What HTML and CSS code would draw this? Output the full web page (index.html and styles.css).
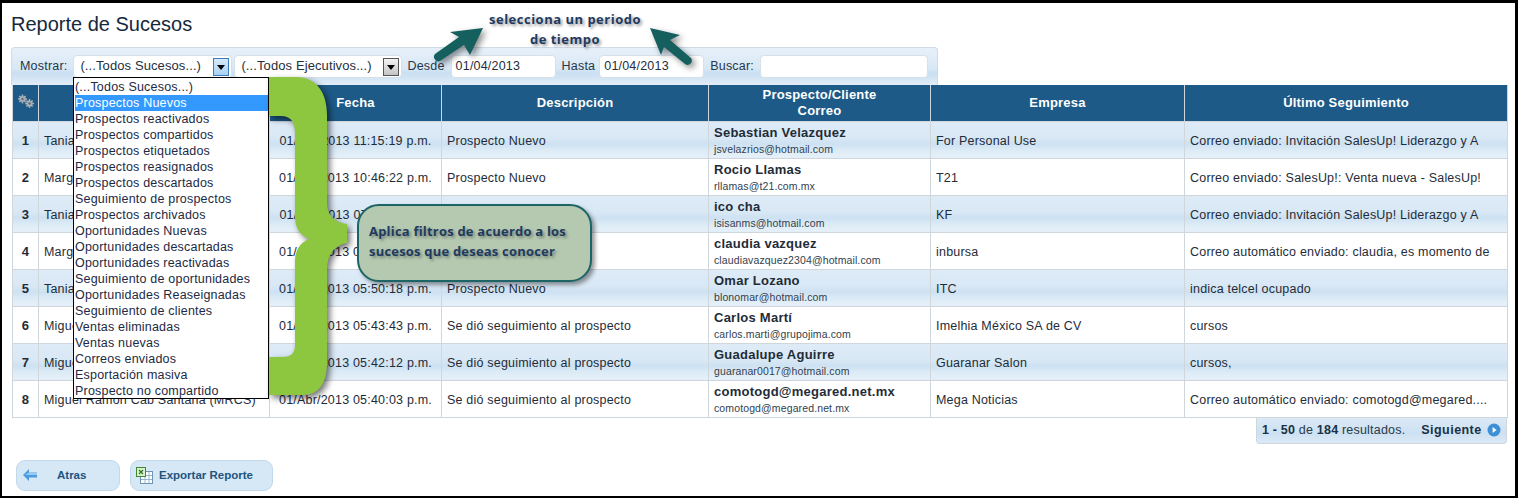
FILE: index.html
```html
<!DOCTYPE html>
<html lang="es">
<head>
<meta charset="utf-8">
<title>Reporte de Sucesos</title>
<link rel="stylesheet" href="styles.css">
</head>
<body>
<div class="frame">
  <h1 class="title">Reporte de Sucesos</h1>
  <div class="filters">
    <span class="lbl">Mostrar:</span>
    <div class="select sel-a"><span>(...Todos Sucesos...)</span><i class="sel-btn active"></i></div>
    <div class="select sel-b"><span>(...Todos Ejecutivos...)</span><i class="sel-btn"></i></div>
    <span class="lbl lbl-desde">Desde</span>
    <div class="input in-date">01/04/2013</div>
    <span class="lbl lbl-hasta">Hasta</span>
    <div class="input in-date">01/04/2013</div>
    <span class="lbl lbl-buscar">Buscar:</span>
    <div class="input in-search"></div>
  </div>
  <table class="grid">
    <colgroup>
      <col class="c1"><col class="c2"><col class="c3"><col class="c4"><col class="c5"><col class="c6"><col class="c7">
    </colgroup>
    <thead>
      <tr>
        <th class="gear-cell"><svg class="gears" viewBox="0 0 18 14" width="18" height="14"><g fill="#9aa3ab" stroke="#59636c" stroke-width=".6"><circle cx="5.5" cy="5" r="3.2"/><circle cx="12.5" cy="9.5" r="3.2"/></g><g stroke="#a9b4bd" stroke-width="1.4"><path d="M5.5 .6v8.8M1.1 5h8.8M2.4 1.9l6.2 6.2M8.6 1.9 2.4 8.1"/><path d="M12.5 5.1v8.8M8.1 9.5h8.8M9.4 6.4l6.2 6.2M15.6 6.4l-6.2 6.2"/></g><circle cx="5.5" cy="5" r="1.2" fill="#5d6a74"/><circle cx="12.5" cy="9.5" r="1.2" fill="#5d6a74"/></svg></th>
        <th>Ejecutivo</th>
        <th>Fecha</th>
        <th>Descripción</th>
        <th>Prospecto/Cliente<br>Correo</th>
        <th>Empresa</th>
        <th>Último Seguimiento</th>
      </tr>
    </thead>
    <tbody>
      <tr class="odd"><td class="num">1</td><td>Tania</td><td class="date">01/Abr/2013 11:15:19 p.m.</td><td>Prospecto Nuevo</td><td class="who"><b>Sebastian Velazquez</b><small>jsvelazrios@hotmail.com</small></td><td>For Personal Use</td><td>Correo enviado: Invitación SalesUp! Liderazgo y A</td></tr>
      <tr><td class="num">2</td><td>Margarita</td><td class="date">01/Abr/2013 10:46:22 p.m.</td><td>Prospecto Nuevo</td><td class="who"><b>Rocio Llamas</b><small>rllamas@t21.com.mx</small></td><td>T21</td><td>Correo enviado: SalesUp!: Venta nueva - SalesUp!</td></tr>
      <tr class="odd"><td class="num">3</td><td>Tania</td><td class="date">01/Abr/2013 07:20:11 p.m.</td><td>Prospecto Nuevo</td><td class="who"><b>ico cha</b><small>isisanms@hotmail.com</small></td><td>KF</td><td>Correo enviado: Invitación SalesUp! Liderazgo y A</td></tr>
      <tr><td class="num">4</td><td>Margarita</td><td class="date">01/Abr/2013 06:02:37 p.m.</td><td>Prospecto Nuevo</td><td class="who"><b>claudia vazquez</b><small>claudiavazquez2304@hotmail.com</small></td><td>inbursa</td><td>Correo automático enviado: claudia, es momento de</td></tr>
      <tr class="odd"><td class="num">5</td><td>Tania</td><td class="date">01/Abr/2013 05:50:18 p.m.</td><td>Prospecto Nuevo</td><td class="who"><b>Omar Lozano</b><small>blonomar@hotmail.com</small></td><td>ITC</td><td>indica telcel ocupado</td></tr>
      <tr><td class="num">6</td><td>Miguel</td><td class="date">01/Abr/2013 05:43:43 p.m.</td><td>Se dió seguimiento al prospecto</td><td class="who"><b>Carlos Martí</b><small>carlos.marti@grupojima.com</small></td><td>Imelhia México SA de CV</td><td>cursos</td></tr>
      <tr class="odd"><td class="num">7</td><td>Miguel</td><td class="date">01/Abr/2013 05:42:12 p.m.</td><td>Se dió seguimiento al prospecto</td><td class="who"><b>Guadalupe Aguirre</b><small>guaranar0017@hotmail.com</small></td><td>Guaranar Salon</td><td>cursos,</td></tr>
      <tr><td class="num">8</td><td>Miguel Ramón Cab Santana (MRCS)</td><td class="date">01/Abr/2013 05:40:03 p.m.</td><td>Se dió seguimiento al prospecto</td><td class="who"><b>comotogd@megared.net.mx</b><small>comotogd@megared.net.mx</small></td><td>Mega Noticias</td><td>Correo automático enviado: comotogd@megared....</td></tr>
    </tbody>
  </table>
  <div class="pager-row">
    <div class="pager"><span class="info"><b>1 - 50</b> de <b>184</b> resultados.</span><b class="next">Siguiente</b>
      <svg class="next-ico" viewBox="0 0 14 14" width="14" height="14"><circle cx="7" cy="7" r="6.5" fill="#3d8fd6"/><path d="M5.6 4v6L9.6 7z" fill="#fff"/></svg>
    </div>
  </div>
  <div class="actions">
    <a class="btn btn-back"><svg viewBox="0 0 14 14" width="14" height="14"><path d="M0 7 6 1v3.500h8v5H6V13z" fill="#4a9be0"/><path d="M6 4.500h8v2.500H2z" fill="#9cc9ef"/></svg><span>Atras</span></a>
    <a class="btn btn-export"><svg viewBox="0 0 17 17" width="17" height="17"><rect x="4.500" y="4.500" width="12" height="12" fill="#fff" stroke="#6d93b5"/><path d="M5 8.500h11M5 12.500h11M9 5v11M13 5v11" stroke="#9ab6cf"/><rect x=".5" y=".5" width="9" height="9" fill="#dff0d0" stroke="#3c8a2e"/><path d="M3 3l4 4M7 3 3 7" stroke="#2f7a22" stroke-width="1.300"/></svg><span>Exportar Reporte</span></a>
  </div>

  <ul class="dropdown">
    <li>(...Todos Sucesos...)</li>
    <li class="on">Prospectos Nuevos</li>
    <li>Prospectos reactivados</li>
    <li>Prospectos compartidos</li>
    <li>Prospectos etiquetados</li>
    <li>Prospectos reasignados</li>
    <li>Prospectos descartados</li>
    <li>Seguimiento de prospectos</li>
    <li>Prospectos archivados</li>
    <li>Oportunidades Nuevas</li>
    <li>Oportunidades descartadas</li>
    <li>Oportunidades reactivadas</li>
    <li>Seguimiento de oportunidades</li>
    <li>Oportunidades Reaseignadas</li>
    <li>Seguimiento de clientes</li>
    <li>Ventas eliminadas</li>
    <li>Ventas nuevas</li>
    <li>Correos enviados</li>
    <li>Esportación masiva</li>
    <li>Prospecto no compartido</li>
  </ul>

  <svg class="overlay" viewBox="0 0 1518 498" width="1518" height="498">
    <path class="brace" d="M269 77H296C316 77 327 92 327 115V203C327 215 335 223 347 224V243C335 245 327 254 327 270V363C327 384 318 395 303 395H269V357H283C291 357 295 353 295 345V262C295 250 300 242 310 239C300 236 295 228 295 216V134C295 122 291 116 281 116H269Z"/>
    <path class="arrow" d="M483 28 450 32 459 37 435 54C432 57 436 63 440 61L464 45 470 55Z"/>
    <path class="arrow" d="M650 28 680 35 670 40 691 58C694 62 689 67 685 64L664 47 661 55Z"/>
  </svg>
  <div class="note-top">selecciona un periodo<br>de tiempo</div>
  <div class="callout">Aplica filtros de acuerdo a los sucesos que deseas conocer</div>
</div>
</body>
</html>
```

FILE: styles.css
```css
* { box-sizing: border-box; }
html, body { margin: 0; padding: 0; }
body { background: #000; font-family: "Liberation Sans", Arial, sans-serif; color: #1d2b38; }
.frame {
  position: relative;
  width: 1513px;
  height: 493px;
  margin: 3px 0 0 2px;
  padding: 0 8px 0 9px;
  background: #fff;
  overflow: hidden;
}
.title {
  margin: 0;
  padding-top: 9px;
  height: 44px;
  font-size: 20px;
  line-height: 24px;
  font-weight: normal;
  color: #16293c;
}
.filters {
  display: flex;
  align-items: center;
  width: 927px;
  height: 38px;
  padding: 0 0 0 8px;
  background: linear-gradient(#e6f0f9 0%, #d9e8f5 55%, #c9dff2 68%, #e2edf8 100%);
  border: 1px solid #cfdbe6;
  border-bottom: 0;
  border-radius: 4px 4px 0 0;
  font-size: 12.5px;
  letter-spacing: .2px;
}
.lbl { color: #25384a; position: relative; top: -1px; }
.select, .input {
  height: 23px;
  background: #fff;
  border: 1px solid #d5e0ea;
  border-radius: 4px;
  font-size: 12.5px;
  line-height: 21px;
  color: #24303c;
}
.select { display: flex; align-items: center; justify-content: space-between; padding: 0 2px 0 6px; font-size: 13px; letter-spacing: .1px; }
.select span { position: relative; top: -1px; }
.sel-a { width: 159px; margin-left: 6px; }
.sel-b { width: 168px; margin-left: 2px; }
.sel-btn {
  position: relative;
  width: 16px;
  height: 18px;
  border: 1px solid #555;
  background: linear-gradient(#f4f4f4, #c4c4c4);
}
.sel-btn.active { border-color: #3a7cbf; background: linear-gradient(#d6ebfb, #a9d2f2); }
.sel-btn::after {
  content: "";
  position: absolute;
  left: 3px;
  top: 6px;
  border: 4px solid transparent;
  border-top: 5px solid #000;
  border-bottom: 0;
}
.lbl-desde { margin-left: 5px; }
.in-date { width: 105px; padding-left: 4px; }
.lbl-desde + .in-date { margin-left: 6px; }
.lbl-hasta + .in-date { margin-left: 4px; }
.lbl-hasta { margin-left: 6px; }
.lbl-buscar { margin-left: 6px; }
.in-search { width: 168px; margin-left: 6px; }
.grid {
  width: 1495px;
  margin-left: 1px;
  border-collapse: collapse;
  table-layout: fixed;
  font-size: 12.5px;
  letter-spacing: .2px;
  color: #1f2c38;
}
.c1 { width: 26px; } .c2 { width: 231px; } .c3 { width: 172px; } .c4 { width: 267px; }
.c5 { width: 222px; } .c6 { width: 254px; } .c7 { width: 323px; }
.grid th {
  height: 36px;
  background: #1d5a87;
  color: #fff;
  font-size: 13px;
  line-height: 16px;
  padding: 0;
  border: 1px solid #cfd6dc;
  border-top: 0;
  letter-spacing: .2px;
}
.gear-cell { vertical-align: top; text-align: center; }
.gears { display: block; margin: 9px 0 0 4px; }
.grid td {
  height: 37px;
  padding: 3px 5px 0;
  border: 1px solid #cfd6dc;
  white-space: nowrap;
  overflow: hidden;
}
.grid .odd td { background: linear-gradient(#deebf7 0%, #d9e8f5 45%, #cde1f2 62%, #dcebf6 80%, #e6f0f9 100%); }
.grid td.num { padding: 2px 0 0; text-align: center; font-weight: bold; font-size: 13px; }
.grid td.date { padding: 3px 0 0; text-align: center; }
.grid td.who { padding: 0 0 0 5px; }
.who b { display: block; font-size: 13px; line-height: 16px; margin-top: 1px; letter-spacing: .25px; }
.who small { display: block; font-size: 10.5px; line-height: 14px; margin-top: 1px; color: #33414e; letter-spacing: .12px; }
.pager-row { display: flex; justify-content: flex-end; }
.pager {
  display: flex;
  align-items: center;
  width: 251px;
  height: 26px;
  padding: 0 0 0 5px;
  font-size: 12.5px;
  letter-spacing: .2px;
  background: linear-gradient(#dbe9f6, #cde1f2 60%, #dbe9f6);
  border: 1px solid #cfd6dc;
  border-top: 0;
  border-radius: 0 0 4px 4px;
  color: #2a3a4a;
}
.pager b { color: #1b3146; }
.pager .next { margin-left: 16px; letter-spacing: .45px; }
.next-ico { margin-left: 5px; }
.actions { display: flex; gap: 10px; margin: 16px 0 0 5px; }
.btn {
  display: flex;
  align-items: center;
  height: 31px;
  background: #d6e7f5;
  border: 1px solid #c2d9ec;
  border-radius: 9px;
  color: #21557f;
  font-size: 11.5px;
  font-weight: bold;
}
.btn-back { width: 104px; padding-left: 6px; }
.btn-back span { margin-left: 20px; }
.btn-export { width: 143px; padding-left: 5px; }
.btn-export span { margin-left: 6px; }
.dropdown {
  position: absolute;
  left: 71px;
  top: 74px;
  width: 196px;
  height: 322px;
  margin: 0;
  padding: 1px 0 0 1px;
  list-style: none;
  background: #fff;
  border: 1px solid #000;
  font-size: 12.5px;
  letter-spacing: .2px;
  line-height: 16px;
  color: #1c2a44;
}
.dropdown li { height: 16px; white-space: nowrap; }
.dropdown .on { background: #3399ff; color: #fff; }
.overlay { position: absolute; left: -2px; top: -3px; pointer-events: none; }
.brace { fill: #8dc63f; filter: drop-shadow(3px 3px 3px rgba(0,0,0,.55)); }
.arrow { fill: #15605f; filter: drop-shadow(3px 3px 3px rgba(0,0,0,.45)); }
.note-top {
  position: absolute;
  left: 468px;
  top: 6px;
  width: 190px;
  text-align: center;
  font-family: "Open Sans", sans-serif;
  font-size: 13px;
  letter-spacing: .5px;
  line-height: 20px;
  font-weight: 700;
  color: #1e3a5f;
  text-shadow: 2px 2px 3px rgba(0,0,0,.4);
}
.callout {
  position: absolute;
  left: 355px;
  top: 201px;
  width: 235px;
  height: 78px;
  padding: 15px 5px 0 10px;
  background: #b5c9b1;
  border: 2px solid #1c6466;
  border-radius: 22px;
  font-family: "Open Sans", sans-serif;
  font-size: 13px;
  letter-spacing: .2px;
  line-height: 20px;
  font-weight: 700;
  color: #1e3a5f;
  text-shadow: 2px 2px 3px rgba(0,0,0,.35);
  box-shadow: 3px 3px 4px rgba(0,0,0,.4);
}
```
